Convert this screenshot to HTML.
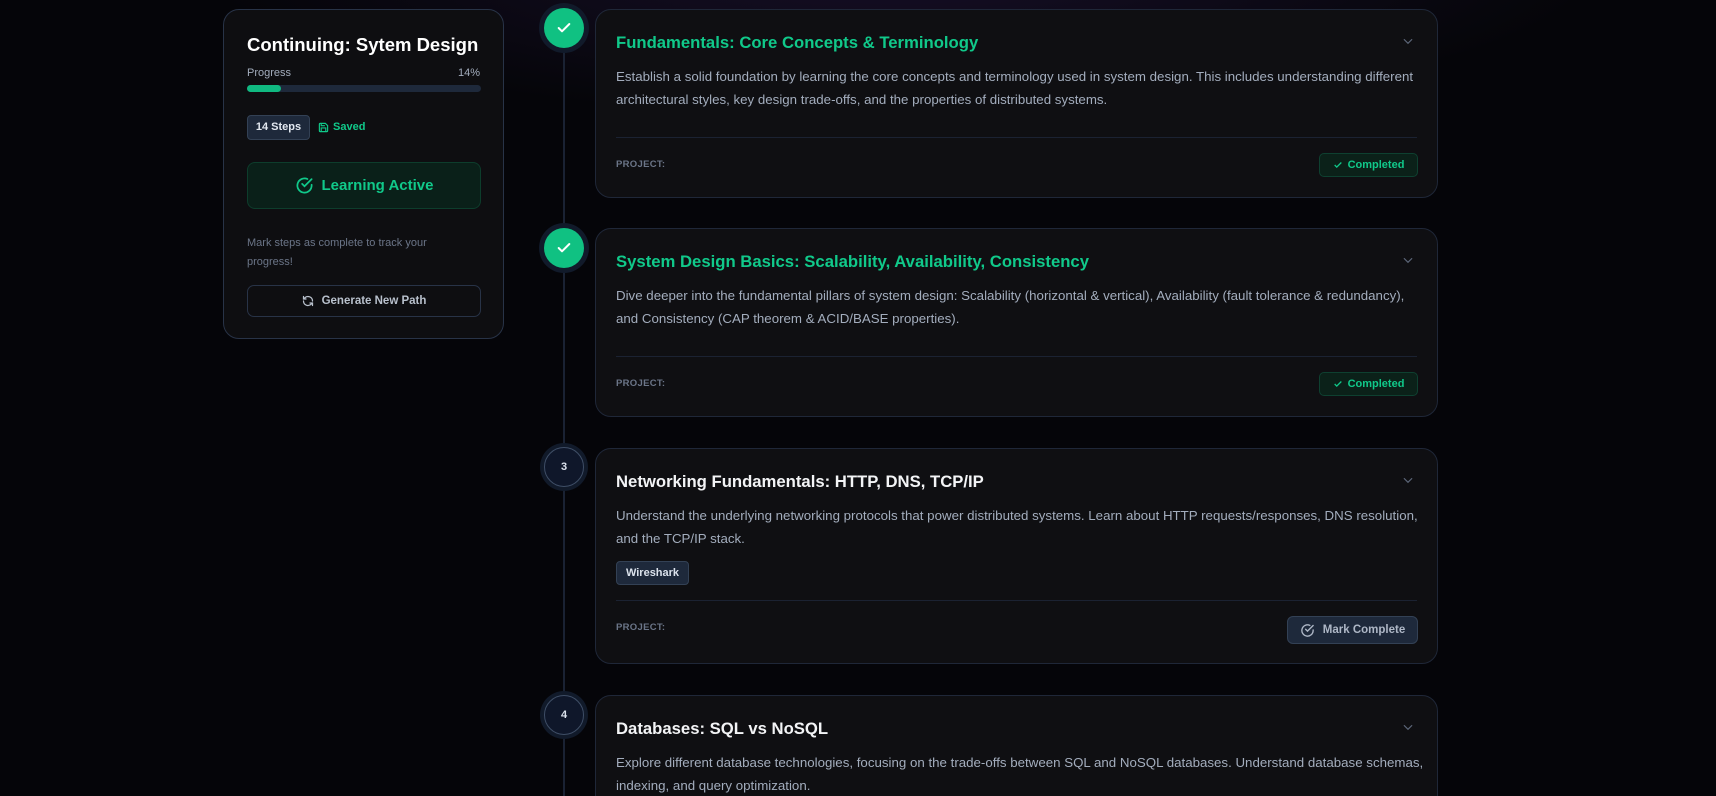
<!DOCTYPE html>
<html><head><meta charset="utf-8"><style>
*{box-sizing:border-box;margin:0;padding:0}
html,body{background:#050509;width:1716px;height:796px;overflow:hidden}
body{font-family:"Liberation Sans",sans-serif}
#w{position:relative;width:1716px;height:796px;overflow:hidden;
background:radial-gradient(ellipse 700px 160px at 900px -40px,#170f28 0%,rgba(5,5,9,0) 100%),#050509;}
.side{position:absolute;left:223px;top:9px;width:281px;height:330px;background:#0e0e11;border:1px solid #283347;border-radius:16px}
.side h1{position:absolute;left:23px;top:24px;font-size:18.5px;font-weight:bold;color:#fff;white-space:nowrap}
.lbl{position:absolute;top:57px;font-size:11px;color:#a3adbd}
.bar{position:absolute;left:23px;top:75px;width:234px;height:7px;border-radius:4px;background:#1e293b}
.bar i{display:block;width:34px;height:7px;border-radius:4px;background:#10b981}
.steps{position:absolute;left:23px;top:105px;width:63px;height:25px;border:1px solid #334155;background:#1e293b;border-radius:4px;color:#e2e8f0;font-size:11px;font-weight:bold;text-align:center;line-height:23px}
.saved{position:absolute;left:94px;top:105px;height:25px;line-height:25px;color:#10c98a;font-size:11px;font-weight:bold;display:flex;align-items:center;gap:4px}
.active{position:absolute;left:23px;top:152px;width:234px;height:47px;border:1px solid #0d3d2c;background:#0a2019;border-radius:8px;color:#10c98a;font-size:15px;font-weight:bold;display:flex;align-items:center;justify-content:center;gap:8px}
.note{position:absolute;left:23px;top:224px;font-size:11px;line-height:19px;color:#6b7588}
.gen{position:absolute;left:23px;top:275px;width:234px;height:32px;border:1px solid #283347;border-radius:7px;color:#b8c0cc;font-size:11.5px;font-weight:bold;display:flex;align-items:center;justify-content:center;gap:8px}
.line{position:absolute;left:563px;top:30px;width:2px;height:766px;background:#1a2233}
.dot{position:absolute;width:40px;height:40px;border-radius:50%;left:544px}
.dot.done{background:#10c182;box-shadow:0 0 0 5px #111a2a}
.dot.todo{background:#0f172a;border:1px solid #3f4e66;box-shadow:0 0 0 4px #111a2a;color:#dbe2ec;font-size:11px;font-weight:bold;text-align:center;line-height:38px}
.dot svg{position:absolute;left:12px;top:12px}
.card{position:absolute;left:595px;width:843px;background:#0f0f12;border:1px solid #1f2738;border-radius:16px}
.card h2{position:absolute;left:20px;top:23px;font-size:16.7px;font-weight:bold;color:#f3f4f6;white-space:nowrap}
.card h2.g{color:#10c98a}
.card p{position:absolute;left:20px;top:56px;font-size:13.3px;line-height:22.5px;color:#a3adbd;white-space:nowrap}
.chev{position:absolute;right:22px;top:24px}
.div{position:absolute;left:20px;right:20px;height:1px;background:#1b2232}
.proj{position:absolute;left:20px;font-size:9.5px;font-weight:bold;color:#6b7588;letter-spacing:.3px}
.comp{position:absolute;right:19px;width:99px;height:24px;border:1px solid #0e4030;background:#0b2119;border-radius:5px;color:#10c98a;font-size:11px;font-weight:bold;display:flex;align-items:center;justify-content:center;gap:5px}
.mark{position:absolute;right:19px;width:131px;height:28px;border:1px solid #334155;background:#1e293b;border-radius:6px;color:#aeb7c6;font-size:11.5px;font-weight:bold;display:flex;align-items:center;justify-content:center;gap:8px}
.tag{position:absolute;left:20px;top:112px;width:73px;height:24px;border:1px solid #334155;background:#1e293b;border-radius:4px;color:#dbe2ec;font-size:11px;font-weight:bold;text-align:center;line-height:22px}
</style></head><body><div id="w">
<div class="side">
<h1>Continuing: Sytem Design</h1>
<div class="lbl" style="left:23px">Progress</div><div class="lbl" style="right:23px">14%</div>
<div class="bar"><i></i></div>
<div class="steps">14 Steps</div>
<div class="saved"><svg width="11" height="11" viewBox="0 0 24 24" fill="none" stroke="#10c98a" stroke-width="2.5"><path d="M5 3h11l5 5v11a2 2 0 0 1-2 2H5a2 2 0 0 1-2-2V5a2 2 0 0 1 2-2z"/><path d="M7 21v-8h10v8M7 3v5h8"/></svg>Saved</div>
<div class="active"><svg width="19" height="19" viewBox="0 0 24 24" fill="none" stroke="#10c98a" stroke-width="2.2" stroke-linecap="round"><path d="M21 11.1V12a9 9 0 1 1-5.3-8.2"/><path d="M21 4 12 13l-3-3"/></svg>Learning Active</div>
<div class="note">Mark steps as complete to track your<br>progress!</div>
<div class="gen"><svg width="12" height="12" viewBox="0 0 24 24" fill="none" stroke="#b8c0cc" stroke-width="2.5" stroke-linecap="round"><path d="M21 12a9 9 0 0 0-15.5-6.2L3 8M3 3v5h5M3 12a9 9 0 0 0 15.5 6.2L21 16M21 21v-5h-5"/></svg>Generate New Path</div>
</div>

<div class="line"></div>
<div class="dot done" style="top:8px"><svg width="16" height="16" viewBox="0 0 24 24" fill="none" stroke="#fff" stroke-width="3" stroke-linecap="round" stroke-linejoin="round"><path d="M4 12l5 5L20 6"/></svg></div>
<div class="dot done" style="top:228px"><svg width="16" height="16" viewBox="0 0 24 24" fill="none" stroke="#fff" stroke-width="3" stroke-linecap="round" stroke-linejoin="round"><path d="M4 12l5 5L20 6"/></svg></div>
<div class="dot todo" style="top:447px">3</div>
<div class="dot todo" style="top:695px">4</div>

<div class="card" style="top:9px;height:189px">
<h2 class="g">Fundamentals: Core Concepts &amp; Terminology</h2>
<svg class="chev" width="14" height="14" viewBox="0 0 24 24" fill="none" stroke="#5d677a" stroke-width="2"><path d="M5 9l7 7 7-7"/></svg>
<p>Establish a solid foundation by learning the core concepts and terminology used in system design. This includes understanding different<br>architectural styles, key design trade-offs, and the properties of distributed systems.</p>
<div class="div" style="top:127px"></div>
<div class="proj" style="top:149px">PROJECT:</div>
<div class="comp" style="top:143px"><svg width="10" height="10" viewBox="0 0 24 24" fill="none" stroke="#10c98a" stroke-width="3"><path d="M4 12l5 5L20 6"/></svg>Completed</div>
</div>

<div class="card" style="top:228px;height:189px">
<h2 class="g">System Design Basics: Scalability, Availability, Consistency</h2>
<svg class="chev" width="14" height="14" viewBox="0 0 24 24" fill="none" stroke="#5d677a" stroke-width="2"><path d="M5 9l7 7 7-7"/></svg>
<p>Dive deeper into the fundamental pillars of system design: Scalability (horizontal &amp; vertical), Availability (fault tolerance &amp; redundancy),<br>and Consistency (CAP theorem &amp; ACID/BASE properties).</p>
<div class="div" style="top:127px"></div>
<div class="proj" style="top:149px">PROJECT:</div>
<div class="comp" style="top:143px"><svg width="10" height="10" viewBox="0 0 24 24" fill="none" stroke="#10c98a" stroke-width="3"><path d="M4 12l5 5L20 6"/></svg>Completed</div>
</div>

<div class="card" style="top:448px;height:216px">
<h2>Networking Fundamentals: HTTP, DNS, TCP/IP</h2>
<svg class="chev" width="14" height="14" viewBox="0 0 24 24" fill="none" stroke="#5d677a" stroke-width="2"><path d="M5 9l7 7 7-7"/></svg>
<p>Understand the underlying networking protocols that power distributed systems. Learn about HTTP requests/responses, DNS resolution,<br>and the TCP/IP stack.</p>
<div class="tag">Wireshark</div>
<div class="div" style="top:151px"></div>
<div class="proj" style="top:173px">PROJECT:</div>
<div class="mark" style="top:167px"><svg width="15" height="15" viewBox="0 0 24 24" fill="none" stroke="#aeb7c6" stroke-width="2.2" stroke-linecap="round"><path d="M21 11.1V12a9 9 0 1 1-5.3-8.2"/><path d="M21 4 12 13l-3-3"/></svg>Mark Complete</div>
</div>

<div class="card" style="top:695px;height:140px">
<h2>Databases: SQL vs NoSQL</h2>
<svg class="chev" width="14" height="14" viewBox="0 0 24 24" fill="none" stroke="#5d677a" stroke-width="2"><path d="M5 9l7 7 7-7"/></svg>
<p>Explore different database technologies, focusing on the trade-offs between SQL and NoSQL databases. Understand database schemas,<br>indexing, and query optimization.</p>
</div>
</div></body></html>
